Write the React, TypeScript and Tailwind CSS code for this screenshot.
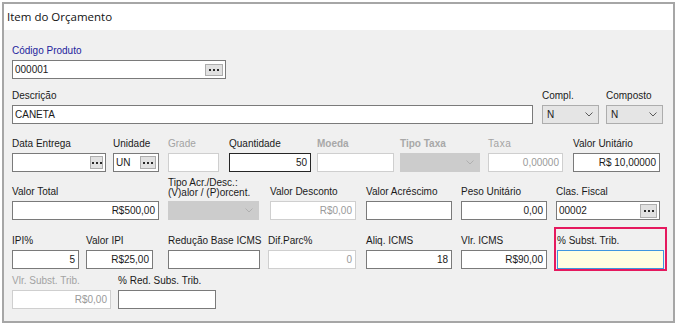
import React from "react";

type Tone = "normal" | "blue" | "off" | "offBold";

const tones: Record<Tone, string> = {
  normal: "text-[#1a1a1a]",
  blue: "text-[#23239c]",
  off: "text-[#a3a3a3]",
  offBold: "text-[#a8a8a8] font-bold",
};

function Field({
  label,
  tone = "normal",
  className = "",
  children,
}: {
  label: React.ReactNode;
  tone?: Tone;
  className?: string;
  children: React.ReactNode;
}) {
  return (
    <div className={`flex flex-col ${className}`}>
      <span className={`mb-[3px] whitespace-nowrap leading-[12px] ${tones[tone]}`}>{label}</span>
      {children}
    </div>
  );
}

const Dots = ({ className }: { className: string }) => (
  <div className={`flex items-center justify-center gap-[2px] border border-[#adadad] bg-[#e1e1e1] ${className}`}>
    <span className="h-[2px] w-[2px] bg-[#2a2a2a]" />
    <span className="h-[2px] w-[2px] bg-[#2a2a2a]" />
    <span className="h-[2px] w-[2px] bg-[#2a2a2a]" />
  </div>
);

function Box({
  value = "",
  right,
  disabled,
  focus,
  btn,
}: {
  value?: string;
  right?: boolean;
  disabled?: boolean;
  focus?: boolean;
  btn?: string;
}) {
  const border = disabled ? "border-[#cfcfcf] text-[#9a9a9a]" : focus ? "border-[#262626]" : "border-[#7a7a7a]";
  return (
    <div className={`flex h-[19px] w-full items-center border bg-white ${border}`}>
      <span className={`flex-1 whitespace-nowrap ${right ? "pr-[3px] text-right" : "pl-[2px]"}`}>{value}</span>
      {btn && <Dots className={btn} />}
    </div>
  );
}

const Chevron = ({ color }: { color: string }) => (
  <svg width="8" height="5" viewBox="0 0 8 5" className="mr-[5px]">
    <polyline points="0.5,0.5 4,4 7.5,0.5" fill="none" stroke={color} strokeWidth="1" />
  </svg>
);

const Combo = ({ value = "", disabled }: { value?: string; disabled?: boolean }) => (
  <div
    className={`flex h-[19px] w-full items-center justify-between border ${
      disabled ? "border-[#cccccc] bg-[#cccccc]" : "border-[#adadad] bg-[#e5e5e5]"
    }`}
  >
    <span className="pl-[4px]">{value}</span>
    <Chevron color={disabled ? "#b0b0b0" : "#5a5a5a"} />
  </div>
);

export default function App() {
  return (
    <div className="h-[328px] w-[681px] bg-white pl-[2px] pt-[2px]">
      <div
        className="flex h-[321px] w-[673px] flex-col border-2 border-[#a6a6a6] bg-[#f0f0f0] text-[10px] text-[#1a1a1a]"
        style={{ fontFamily: '"Liberation Sans", Arial, sans-serif' }}
      >
        <div
          className="flex h-[26px] items-center bg-white pl-[3px] text-[11.5px] text-[#111]"
          style={{ fontFamily: '"Open Sans", "Noto Sans", sans-serif' }}
        >
          Item do Orçamento
        </div>

        <div className="flex flex-col pl-[8px] pt-[15px]">
          {/* Código */}
          <div className="flex">
            <Field label="Código Produto" tone="blue" className="w-[214px]">
              <Box value="000001" btn="mr-[2px] h-[12px] w-[18px]" />
            </Field>
          </div>

          {/* Descrição */}
          <div className="mt-[11px] flex items-end">
            <Field label="Descrição" className="w-[521px]">
              <Box value="CANETA" />
            </Field>
            <Field label="Compl." className="ml-[9px] w-[57px]">
              <Combo value="N" />
            </Field>
            <Field label="Composto" className="ml-[7px] w-[57px]">
              <Combo value="N" />
            </Field>
          </div>

          {/* Data / Quantidade */}
          <div className="mt-[14px] flex items-end">
            <Field label="Data Entrega" className="w-[94px]">
              <Box btn="mr-[2px] h-[13px] w-[13px]" />
            </Field>
            <Field label="Unidade" className="ml-[7px] w-[46px]">
              <Box value="UN" btn="mr-[2px] h-[13px] w-[16px]" />
            </Field>
            <Field label="Grade" tone="off" className="ml-[9px] w-[51px]">
              <Box disabled />
            </Field>
            <Field label="Quantidade" className="ml-[10px] w-[82px]">
              <Box value="50" right focus />
            </Field>
            <Field label="Moeda" tone="offBold" className="ml-[6px] w-[77px]">
              <Box disabled />
            </Field>
            <Field label="Tipo Taxa" tone="offBold" className="ml-[6px] w-[80px]">
              <Combo disabled />
            </Field>
            <Field label={<span className="tracking-[0.6px]">Taxa</span>} tone="off" className="ml-[8px] w-[75px]">
              <Box value="0,00000" right disabled />
            </Field>
            <Field label="Valor Unitário" className="ml-[10px] w-[87px]">
              <Box value="R$ 10,00000" right />
            </Field>
          </div>

          {/* Valor Total */}
          <div className="mt-[6px] flex items-end">
            <Field label="Valor Total" className="w-[147px]">
              <Box value="R$500,00" right />
            </Field>
            <div className="ml-[9px] flex w-[91px] flex-col">
              <span className="mb-[3px] whitespace-nowrap leading-[10px] text-[#1a1a1a]">
                Tipo Acr./Desc.:
                <br />
                (V)alor / (P)orcent.
              </span>
              <Combo disabled />
            </div>
            <Field label="Valor Desconto" className="ml-[11px] w-[86px]">
              <Box value="R$0,00" right disabled />
            </Field>
            <Field label="Valor Acréscimo" className="ml-[10px] w-[86px]">
              <Box />
            </Field>
            <Field label="Peso Unitário" className="ml-[9px] w-[86px]">
              <Box value="0,00" right />
            </Field>
            <Field label="Clas. Fiscal" className="ml-[9px] w-[104px]">
              <Box value="00002" btn="mr-[2px] h-[14px] w-[17px]" />
            </Field>
          </div>

          {/* IPI / ICMS */}
          <div className="mt-[15px] flex items-start">
            <Field label="IPI%" className="w-[67px]">
              <Box value="5" right />
            </Field>
            <Field label="Valor IPI" className="ml-[7px] w-[67px]">
              <Box value="R$25,00" right />
            </Field>
            <Field label="Redução Base ICMS" className="ml-[15px] w-[92px]">
              <Box />
            </Field>
            <Field label="Dif.Parc%" className="ml-[8px] w-[88px]">
              <Box value="0" right disabled />
            </Field>
            <Field label="Aliq. ICMS" className="ml-[10px] w-[86px]">
              <Box value="18" right />
            </Field>
            <Field label="Vlr. ICMS" className="ml-[9px] w-[86px]">
              <Box value="R$90,00" right />
            </Field>
            <div className="-mt-[8px] ml-[7px] flex w-[113px] flex-col border-2 border-[#e5195e] px-[1px] pt-[6px]">
              <span className="mb-[3px] whitespace-nowrap leading-[12px] text-[#1a1a1a]">% Subst. Trib.</span>
              <div className="h-[19px] w-full border border-[#3f96e0] bg-[#ffffe1]" />
            </div>
          </div>

          {/* Subst. Trib. */}
          <div className="mt-[4px] flex items-end">
            <Field label="Vlr. Subst. Trib." tone="off" className="w-[99px]">
              <Box value="R$0,00" right disabled />
            </Field>
            <Field label="% Red. Subs. Trib." className="ml-[7px] w-[98px]">
              <Box />
            </Field>
          </div>
        </div>
      </div>
    </div>
  );
}
